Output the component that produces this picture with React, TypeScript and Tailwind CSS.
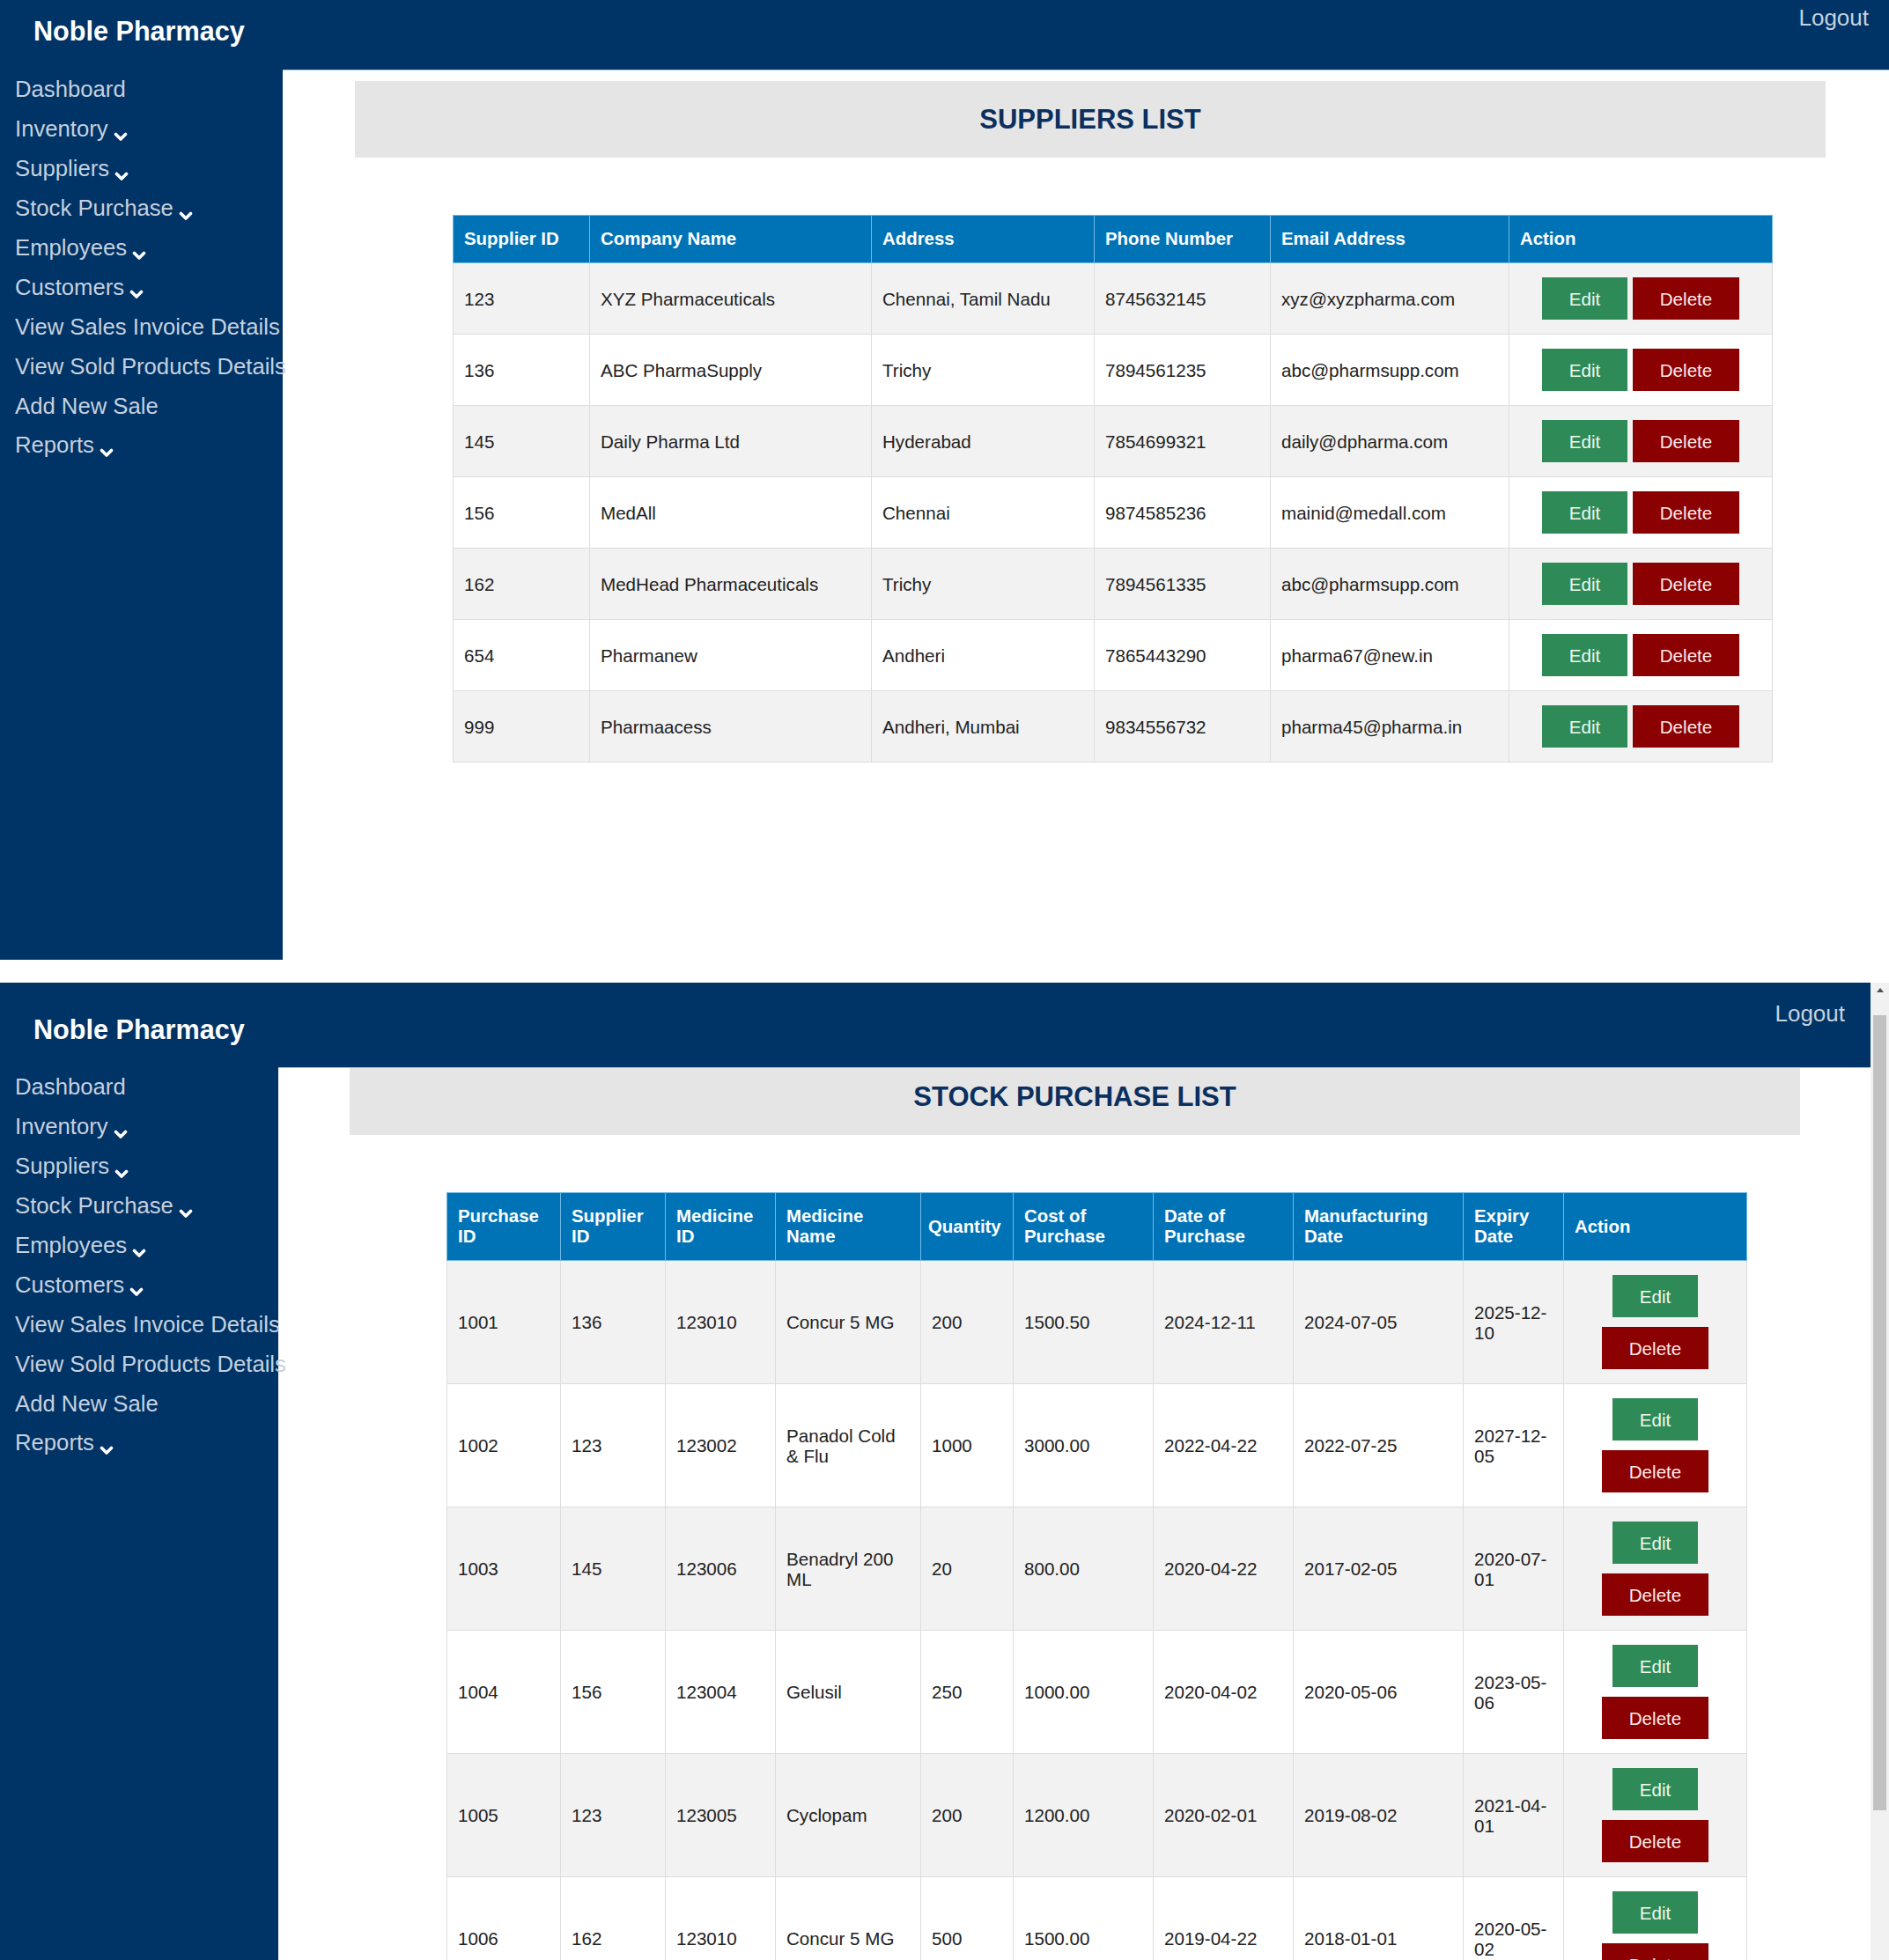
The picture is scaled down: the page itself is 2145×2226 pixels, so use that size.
import React from "react";

const menu: { label: string; chevron: boolean }[] = [
  { label: "Dashboard", chevron: false },
  { label: "Inventory", chevron: true },
  { label: "Suppliers", chevron: true },
  { label: "Stock Purchase", chevron: true },
  { label: "Employees", chevron: true },
  { label: "Customers", chevron: true },
  { label: "View Sales Invoice Details", chevron: false },
  { label: "View Sold Products Details", chevron: false },
  { label: "Add New Sale", chevron: false },
  { label: "Reports", chevron: true },
];

const suppliers = [
  ["123", "XYZ Pharmaceuticals", "Chennai, Tamil Nadu", "8745632145", "xyz@xyzpharma.com"],
  ["136", "ABC PharmaSupply", "Trichy", "7894561235", "abc@pharmsupp.com"],
  ["145", "Daily Pharma Ltd", "Hyderabad", "7854699321", "daily@dpharma.com"],
  ["156", "MedAll", "Chennai", "9874585236", "mainid@medall.com"],
  ["162", "MedHead Pharmaceuticals", "Trichy", "7894561335", "abc@pharmsupp.com"],
  ["654", "Pharmanew", "Andheri", "7865443290", "pharma67@new.in"],
  ["999", "Pharmaacess", "Andheri, Mumbai", "9834556732", "pharma45@pharma.in"],
];

const stock = [
  { id: "1001", sup: "136", med: "123010", name: ["Concur 5 MG"], qty: "200", cost: "1500.50", dop: "2024-12-11", mfg: "2024-07-05", exp: "2025-12-10" },
  { id: "1002", sup: "123", med: "123002", name: ["Panadol Cold", "& Flu"], qty: "1000", cost: "3000.00", dop: "2022-04-22", mfg: "2022-07-25", exp: "2027-12-05" },
  { id: "1003", sup: "145", med: "123006", name: ["Benadryl 200", "ML"], qty: "20", cost: "800.00", dop: "2020-04-22", mfg: "2017-02-05", exp: "2020-07-01" },
  { id: "1004", sup: "156", med: "123004", name: ["Gelusil"], qty: "250", cost: "1000.00", dop: "2020-04-02", mfg: "2020-05-06", exp: "2023-05-06" },
  { id: "1005", sup: "123", med: "123005", name: ["Cyclopam"], qty: "200", cost: "1200.00", dop: "2020-02-01", mfg: "2019-08-02", exp: "2021-04-01" },
  { id: "1006", sup: "162", med: "123010", name: ["Concur 5 MG"], qty: "500", cost: "1500.00", dop: "2019-04-22", mfg: "2018-01-01", exp: "2020-05-02" },
];

function Chevron() {
  return (
    <svg width="16" height="11" viewBox="0 0 16 11" className="ml-[6px] translate-y-[9px] shrink-0">
      <polyline points="2.5,2.5 8,8 13.5,2.5" fill="none" stroke="#ffffff" strokeWidth="3.6" strokeLinecap="round" strokeLinejoin="round" />
    </svg>
  );
}

function SidebarMenu() {
  return (
    <nav className="flex flex-col">
      {menu.map((m) => (
        <div key={m.label} className="flex items-center pl-[17px] h-[44.9px] text-[25.7px] leading-[44px] text-[#c6d1df] whitespace-nowrap">
          <span>{m.label}</span>
          {m.chevron && <Chevron />}
        </div>
      ))}
    </nav>
  );
}

function EditBtn() {
  return (
    <span className="inline-flex items-center justify-center w-[97px] h-[48px] bg-[#2e8b57] text-[#eef8ee] text-[20.6px] shrink-0">
      Edit
    </span>
  );
}

function DeleteBtn() {
  return (
    <span className="inline-flex items-center justify-center w-[121px] h-[48px] bg-[#8b0000] text-[#fbeaea] text-[20.6px] shrink-0">
      Delete
    </span>
  );
}

const th = "bg-[#0073b7] text-white font-bold text-[20.4px] leading-[23px] px-[12px] py-[15px] text-left align-middle border border-[#6fb8e4]";
const td = "border border-[#dddddd] px-[12px] py-[16px] text-[20.6px] leading-[23px] text-[#222222] align-middle";

function SuppliersTable() {
  return (
    <table className="table-fixed border-collapse w-[1498px]">
      <colgroup>
        <col className="w-[155px]" />
        <col className="w-[320px]" />
        <col className="w-[253px]" />
        <col className="w-[200px]" />
        <col className="w-[271px]" />
        <col className="w-[299px]" />
      </colgroup>
      <thead>
        <tr>
          <th className={th}>Supplier ID</th>
          <th className={th}>Company Name</th>
          <th className={th}>Address</th>
          <th className={th}>Phone Number</th>
          <th className={th}>Email Address</th>
          <th className={th}>Action</th>
        </tr>
      </thead>
      <tbody>
        {suppliers.map((r, i) => (
          <tr key={r[0]} className={i % 2 === 0 ? "bg-[#f2f2f2]" : "bg-white"}>
            {r.map((c, j) => (
              <td key={j} className={td}>
                {c}
              </td>
            ))}
            <td className={td}>
              <div className="flex justify-center gap-[6px]">
                <EditBtn />
                <DeleteBtn />
              </div>
            </td>
          </tr>
        ))}
      </tbody>
    </table>
  );
}

function StockTable() {
  return (
    <table className="table-fixed border-collapse w-[1476px]">
      <colgroup>
        <col className="w-[129px]" />
        <col className="w-[119px]" />
        <col className="w-[125px]" />
        <col className="w-[165px]" />
        <col className="w-[105px]" />
        <col className="w-[159px]" />
        <col className="w-[159px]" />
        <col className="w-[193px]" />
        <col className="w-[114px]" />
        <col className="w-[208px]" />
      </colgroup>
      <thead>
        <tr>
          <th className={th}>Purchase<br />ID</th>
          <th className={th}>Supplier<br />ID</th>
          <th className={th}>Medicine<br />ID</th>
          <th className={th}>Medicine<br />Name</th>
          <th className={th + " !px-[8px] whitespace-nowrap"}>Quantity</th>
          <th className={th}>Cost of<br />Purchase</th>
          <th className={th}>Date of<br />Purchase</th>
          <th className={th}>Manufacturing<br />Date</th>
          <th className={th}>Expiry<br />Date</th>
          <th className={th}>Action</th>
        </tr>
      </thead>
      <tbody>
        {stock.map((r, i) => (
          <tr key={r.id} className={i % 2 === 0 ? "bg-[#f2f2f2]" : "bg-white"}>
            <td className={td}>{r.id}</td>
            <td className={td}>{r.sup}</td>
            <td className={td}>{r.med}</td>
            <td className={td}>
              {r.name.map((n, k) => (
                <div key={k}>{n}</div>
              ))}
            </td>
            <td className={td}>{r.qty}</td>
            <td className={td}>{r.cost}</td>
            <td className={td}>{r.dop}</td>
            <td className={td}>{r.mfg}</td>
            <td className={td}>
              <div>{r.exp.slice(0, 8)}</div>
              <div>{r.exp.slice(8)}</div>
            </td>
            <td className={td}>
              <div className="flex flex-col items-center gap-[11px]">
                <EditBtn />
                <DeleteBtn />
              </div>
            </td>
          </tr>
        ))}
      </tbody>
    </table>
  );
}

export default function App() {
  return (
    <div className="w-[2145px] h-[2226px] overflow-hidden bg-white font-['Liberation_Sans',Arial,Helvetica,sans-serif]">
      {/* First screenshot */}
      <div className="h-[1090px] flex flex-col">
        <header className="h-[79px] shrink-0 bg-[#003366] flex justify-between items-start pl-[38px] pr-[23px]">
          <div className="mt-[16px] text-[30.6px] leading-[38px] font-bold text-white">Noble Pharmacy</div>
          <div className="mt-[5px] text-[26px] leading-[30px] text-[#c6d1df]">Logout</div>
        </header>
        <div className="flex flex-1 min-h-0">
          <aside className="w-[321px] shrink-0 bg-[#003366]">
            <SidebarMenu />
          </aside>
          <main className="flex-1 border-t border-[#9cc3e0] pt-[12px]">
            <div className="ml-[82px] mr-[72px] h-[87px] bg-[#e5e5e5] flex items-center justify-center">
              <h1 className="text-[31px] leading-[36px] font-bold text-[#0b2f5e]">SUPPLIERS LIST</h1>
            </div>
            <div className="mt-[65px] ml-[193px]">
              <SuppliersTable />
            </div>
          </main>
        </div>
      </div>

      {/* Second screenshot */}
      <div className="mt-[26px] h-[1110px] overflow-hidden flex">
        <div className="w-[2124px] flex flex-col">
          <header className="h-[96px] shrink-0 bg-[#003366] flex justify-between items-start pl-[38px] pr-[29px]">
            <div className="mt-[34px] text-[30.6px] leading-[38px] font-bold text-white">Noble Pharmacy</div>
            <div className="mt-[20px] text-[26px] leading-[30px] text-[#c6d1df]">Logout</div>
          </header>
          <div className="flex flex-1 min-h-0">
            <aside className="w-[316px] shrink-0 bg-[#003366]">
              <SidebarMenu />
            </aside>
            <main className="flex-1 border-t border-[#9cc3e0]">
              <div className="ml-[81px] mr-[80px] h-[76px] bg-[#e5e5e5] flex justify-center pt-[18px]">
                <h1 className="text-[31px] leading-[30px] font-bold text-[#0b2f5e]">STOCK PURCHASE LIST</h1>
              </div>
              <div className="mt-[65px] ml-[191px]">
                <StockTable />
              </div>
            </main>
          </div>
        </div>
        <div className="w-[21px] bg-[#f1f1f1] flex flex-col items-center">
          <div className="mt-[6px] w-0 h-0 border-l-[4px] border-r-[4px] border-b-[5px] border-l-transparent border-r-transparent border-b-[#505050]" />
          <div className="mt-[26px] w-[15px] h-[903px] bg-[#c1c1c1]" />
        </div>
      </div>
    </div>
  );
}
